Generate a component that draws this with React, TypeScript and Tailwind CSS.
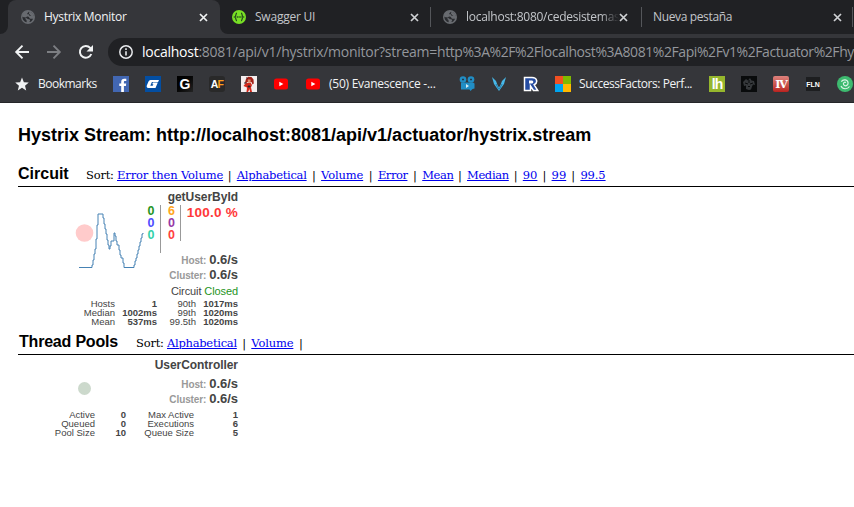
import React from "react";

const ui = "font-['Open_Sans','Noto_Sans',sans-serif]";
const arial = "font-['Liberation_Sans',Arial,sans-serif]";
const serif = "font-['DejaVu_Serif',serif]";

function Globe() {
  return (
    <svg width="14" height="14" viewBox="0 0 14 14" className="shrink-0">
      <circle cx="7" cy="7" r="7" fill="#686b70" />
      <path d="M6.800 1.500C4 1.500 2 3.300 1.500 5.800L5 6.200l2.500.6c1 .3.500 1.700 1.700 1.900h2.900c-.4 1-1.400 2.600-3 3.300l-.9-.5 1-.8-.4-1.200-2-.5L5.200 8H4.500v1.300l1 .8.2 2.200C3.300 11.800 1.600 9.800 1.400 7.500 1 4 3.500 1.300 6.800 1.500Z" fill="#2a2c30" />
      <path d="M1 4.500 3.500 1.500 7 .8 6.300 3 4.800 3.600 4 5.400 6.200 6 5 7.500 1.300 7Z" fill="#686b70" />
      <path d="M7.800 1.800c-.8 1.400-1.700 1.300-1.600 2.400h1.600L8.700 6h3.800C12.300 3.800 10.500 1.900 7.800 1.800Z" fill="#2a2c30" />
      <path d="M8.500 1.500 11.500 3l1.300 3-2 .3-1.600-1.100L8 3.300Z" fill="#686b70" />
    </svg>
  );
}

function Close({ color = "#d0d2d5" }: { color?: string }) {
  return (
    <svg width="9" height="9" viewBox="0 0 9 9" className="shrink-0">
      <path d="m1 1 7 7M8 1 1 8" stroke={color} strokeWidth="1.700" />
    </svg>
  );
}

function TabStrip() {
  return (
    <div className={`flex h-[34px] w-[854px] overflow-hidden bg-[#202124] text-[12px] ${ui}`}>
      <svg width="8" height="34" className="shrink-0"><path d="M0 34a8 8 0 0 0 8-8v8Z" fill="#35363a" /></svg>
      <div className="flex w-[212px] shrink-0 items-center rounded-t-[8px] bg-[#35363a] pl-[13px] pr-[12px] text-[#f1f3f4]">
        <Globe />
        <span className="ml-[9px] flex-1 whitespace-nowrap tracking-[-0.3px]">Hystrix Monitor</span>
        <Close color="#f1f3f4" />
      </div>
      <svg width="8" height="34" className="shrink-0"><path d="M8 34a8 8 0 0 1-8-8v8Z" fill="#35363a" /></svg>
      <div className="flex w-[202px] shrink-0 items-center pl-[4px] pr-[11px] text-[#c3c6ca]">
        <svg width="14" height="14" viewBox="0 0 14 14">
          <circle cx="7" cy="7" r="7" fill="#78df25" />
          <path d="M5 3.200C3.300 3.200 4.500 6.300 2.700 7 4.500 7.700 3.300 10.800 5 10.800M9 3.200c1.700 0 .5 3.100 2.300 3.800C9.500 7.700 10.700 10.800 9 10.800" fill="none" stroke="#23451e" strokeWidth="1.200" />
          <path d="M4.700 7h4.800" stroke="#23451e" strokeWidth="1.400" strokeDasharray="1.200 .6" />
        </svg>
        <span className="ml-[9px] flex-1 whitespace-nowrap tracking-[-0.22px]">Swagger UI</span>
        <Close />
      </div>
      <div className="mt-[7px] h-5 w-px shrink-0 bg-[#54565a]" />
      <div className="flex w-[210px] shrink-0 items-center pl-[12px] pr-[13px] text-[#c3c6ca]">
        <Globe />
        <span className="ml-[9px] w-[154px] overflow-hidden whitespace-nowrap tracking-[-0.27px] [mask-image:linear-gradient(to_right,black_88%,transparent)]">localhost:8080/cedesistemas</span>
        <Close />
      </div>
      <div className="mt-[7px] h-5 w-px shrink-0 bg-[#54565a]" />
      <div className="flex w-[210px] shrink-0 items-center pl-[11px] pr-[10px] text-[#c3c6ca]">
        <span className="flex-1 whitespace-nowrap tracking-[-0.36px]">Nueva pestaña</span>
        <Close />
      </div>
      <div className="mt-[7px] h-5 w-px shrink-0 bg-[#54565a]" />
    </div>
  );
}

function Toolbar() {
  return (
    <div className={`flex h-[36px] w-[854px] items-center overflow-hidden bg-[#35363a] ${ui}`}>
      <svg width="108" height="36" viewBox="0 0 108 36" fill="none" className="shrink-0">
        <path d="M29 18H16.500M22.500 11.700 16.200 18l6.300 6.300" stroke="#f1f3f4" strokeWidth="1.900" />
        <path d="M47 18h12.500M53.500 11.700 59.800 18l-6.300 6.300" stroke="#7d7f83" strokeWidth="1.900" />
        <path d="M91.300 20a5.900 5.900 0 1 1-1.100-6.100L92 15.700" stroke="#f1f3f4" strokeWidth="2" />
        <path d="M93 11v6.500h-6.500Z" fill="#f1f3f4" />
      </svg>
      <div className="flex h-7 flex-1 items-center overflow-hidden rounded-l-full bg-[#202124] pl-[11px]">
        <svg width="14" height="14" viewBox="0 0 14 14" className="shrink-0">
          <circle cx="7" cy="7" r="6.200" fill="none" stroke="#e8eaed" strokeWidth="1.500" />
          <path d="M7 6.200v4.300M7 3.300v1.600" stroke="#e8eaed" strokeWidth="1.600" />
        </svg>
        <span className="ml-[9px] whitespace-nowrap text-[14px] leading-[20px] tracking-[-0.25px] text-[#94979c]"><span className="text-white">localhost</span>:8081/api/v1/hystrix/monitor?stream=<span className="tracking-[-0.43px]">http%3A%2F%2Flocalhost%3A8081%2Fapi%2Fv1%2Factuator%2Fhys</span></span>
      </div>
    </div>
  );
}

function Youtube() {
  return (
    <svg width="16" height="16" viewBox="0 0 16 16" className="shrink-0">
      <rect x="1" y="2.500" width="14" height="11" rx="2.500" fill="#f00" />
      <path d="M6.300 5.700v4.600L10.400 8Z" fill="white" />
    </svg>
  );
}

function Bookmarks() {
  return (
    <div className={`flex h-[33px] w-[854px] items-center overflow-hidden border-b border-[#252629] bg-[#35363a] pb-1 text-[12px] text-[#f1f3f4] ${ui}`}>
      <svg width="14" height="14" viewBox="0 0 24 24" className="ml-[15px] shrink-0"><path d="m12 1 3.200 7.800 8.400.6-6.400 5.400 2 8.200-7.200-4.400L4.800 23l2-8.200L.4 9.400l8.400-.6Z" fill="#f1f3f4" /></svg>
      <span className="ml-[9px] w-[59px] shrink-0 whitespace-nowrap tracking-[-0.5px]">Bookmarks</span>
      <div className="ml-4 flex shrink-0 gap-4">
        <svg width="16" height="16" viewBox="0 0 16 16"><rect width="16" height="16" fill="#4267b2" /><path d="M8.200 16V10H6.300V7.500h1.900V5.900c0-2 1.200-3.200 3.100-3.200l2 .1v2.300h-1.400c-.8 0-1 .4-1 1.100v1.300h2.300l-.3 2.500h-2v6Z" fill="white" /></svg>
        <svg width="16" height="16" viewBox="0 0 16 16"><rect width="16" height="16" fill="#034ea2" /><path d="M5.500 4H14l-.9 2H6.900L5.300 9.700h2.400l.7-1.500H7.200l.7-1.700h4.900L10.500 12H3.500C1.500 12 1.300 10.500 2 9l1.500-3.500Q4.100 4 5.500 4Z" fill="white" /></svg>
        <div className={`flex h-4 w-4 items-center justify-center bg-gradient-to-br from-black to-[#242424] text-[14px] font-bold leading-none text-white ${arial}`}>G</div>
        <div className={`flex h-4 w-4 items-center justify-center rounded-[3px] bg-[#292929] text-[10.500px] font-bold leading-none tracking-[-0.8px] text-white ${arial}`}>A<span className="text-[#ff9d1c]">F</span></div>
        <svg width="16" height="16" viewBox="0 0 16 16"><rect width="16" height="16" fill="#f5eeee" /><path d="M5 3 7 .8 10.500 1l2 2.500.3 4-1.300 1L10.500 6H6L5 8 4 6.500Z" fill="#a32117" /><path d="m5.500 7 4-.5 1.500 2.500-1 2.500 1 4.500H9l-.5-3L7 16H5.500L6 11.500 2.500 10 4 8Z" fill="#d52a1c" /><path d="M6.800 3.500h2.800v3H6.800Z" fill="#dd9270" /><path d="m5.500 1.500 1 1.500M3 7h2.500M7 10h2v1H7Z" stroke="#34252b" /></svg>
        <Youtube /><Youtube />
      </div>
      <span className="ml-2 w-[107px] shrink-0 whitespace-nowrap tracking-[-0.25px]">(50) Evanescence -...</span>
      <div className="ml-[23px] flex shrink-0 gap-4">
        <svg width="16" height="16" viewBox="0 0 16 16"><circle cx="4" cy="3.500" r="3.300" fill="#218ec5" /><circle cx="12" cy="3.500" r="3.300" fill="#218ec5" /><path d="M2 6.500h12l1.500 1v5l-2 .5-2 2-1-1.500H2Z" fill="#218ec5" /><path d="M7 8v4l3-2Z" fill="#d9edf5" /><path d="M3 3.500h2M11 3.500h2" stroke="#24394a" strokeWidth="1.500" /></svg>
        <svg width="16" height="16" viewBox="0 0 16 16"><path d="m1 1 4 4 1.500 4L8 11.500 9.500 9 11 5l4-4-2 7-2.500 3.500L8 15l-2.500-3.500L3 8Z" fill="#48b8e8" /><path d="m5 8 2.500 5h1L11 8" fill="none" stroke="#237ba9" /></svg>
        <svg width="16" height="16" viewBox="0 0 16 16"><path d="M1.500 14.500V1.500H9c5.500 0 6 5.500 2.200 7.300l3.600 5.700h-4.300L7.500 10v4.500Z" fill="#254ca1" stroke="white" strokeWidth="1.500" /><path d="M6 4.500h3c1.700 0 1.700 3 0 3H6Z" fill="white" /></svg>
        <div className="grid h-4 w-4 grid-cols-2"><i className="bg-[#f25022]" /><i className="bg-[#7fba00]" /><i className="bg-[#00a4ef]" /><i className="bg-[#ffb900]" /></div>
      </div>
      <span className="ml-2 w-[114px] shrink-0 whitespace-nowrap tracking-[-0.43px]">SuccessFactors: Perf...</span>
      <div className="ml-4 flex shrink-0 gap-4">
        <div className={`flex h-4 w-4 items-center justify-center bg-[#96b72d] text-[14px] font-bold leading-none tracking-[-1px] text-white ${arial}`}>lh</div>
        <svg width="16" height="16" viewBox="0 0 16 16"><rect width="16" height="16" fill="#090b0c" /><path d="m2 6 3-3 2 1.500L9 2l1.500 2.500 2.500.5 1 4-2-.5-1 2-1 3-2 .5-3-1V9.500L3 10Z" fill="#35383b" /><path d="m4 7 3 1m2 0 3-1M7 10.500h2M8 4v3" stroke="#090b0c" /></svg>
        <div className="flex h-4 w-4 items-center justify-center rounded-[2px] bg-gradient-to-b from-[#dc817c] to-[#ba201e] font-['DejaVu_Serif',serif] text-[11px] font-bold leading-none tracking-[-1px] text-white">IV</div>
        <div className={`flex h-4 w-4 items-center justify-center border border-[#34363a] bg-[#1d1e20] text-[7px] font-bold leading-none text-white ${arial}`}>FLN</div>
        <svg width="16" height="16" viewBox="0 0 16 16"><circle cx="8" cy="8" r="8" fill="#3dba6f" /><path d="M9 6.500C7.500 5.500 5.800 7 6.700 8.700c1.200 2.200 4.600.9 4.400-1.700C10.800 3.600 6.300 2.700 4.300 5.700M4 10c1.500 3.600 6.500 3.500 8.500.5" fill="none" stroke="#daf4e4" strokeWidth="1.200" /></svg>
      </div>
    </div>
  );
}

type SortLink = { text: string; size: string };

const alphabetical: SortLink = { text: "Alphabetical", size: "w-[70px] tracking-[-0.27px]" };
const volume: SortLink = { text: "Volume", size: "w-[42.500px] tracking-[-0.15px]" };
const circuitLinks: SortLink[] = [
  { text: "Error then Volume", size: "w-[105.500px] tracking-[-0.13px]" },
  alphabetical,
  volume,
  { text: "Error", size: "w-[30px] tracking-[-0.45px]" },
  { text: "Mean", size: "w-[30.500px] tracking-[-0.4px]" },
  { text: "Median", size: "w-[41.500px] tracking-[-0.35px]" },
  { text: "90", size: "w-[14.500px]" },
  { text: "99", size: "w-[14.500px]" },
  { text: "99.5", size: "w-[25px] tracking-[-0.1px]" },
];

function SortLinks({ links, trailing = false }: { links: SortLink[]; trailing?: boolean }) {
  return (
    <div className={`flex whitespace-nowrap text-[11.500px] leading-[14px] ${serif}`}>
      <span className="w-[31px] tracking-[-0.2px]">Sort:</span>
      {links.map((link, i) => (
        <React.Fragment key={link.text}>
          <a className={`text-[#0000ee] underline underline-offset-1 ${link.size}`}>{link.text}</a>
          {(i < links.length - 1 || trailing) && <span className="w-[14.300px] text-center">|</span>}
        </React.Fragment>
      ))}
    </div>
  );
}

function Rate({ label }: { label: string }) {
  return (
    <div className="flex h-[15px] items-baseline justify-end leading-[13px]">
      <span className="mr-[3px] text-[10px] font-bold tracking-[-0.1px] text-[#999]">{label}</span>
      <span className="text-[13px] font-bold tracking-[-0.05px] text-[#444]">0.6/s</span>
    </div>
  );
}

function Circuit() {
  return (
    <section className={`h-[140px] w-[220px] pt-[3px] text-[#444] ${arial}`}>
      <div className="h-[15px] text-right text-[12px] font-bold leading-[15px] tracking-[-0.03px]">getUserById</div>
      <div className="flex h-[48px]">
        <svg width="127" height="65" viewBox="0 0 127 65" className="shrink-0">
          <circle cx="66.500" cy="28" r="8.800" fill="#ffcbcb" />
          <path d="M61 62.500H74V60h1v-5h1v-6h1v-5h1V34h1V20h1V9h5v4h1v6h1v5h1v5h1v6h1v5h1v4h1v-3h1v-5h3v-8h1v3h1v5h1v4h2v5h1v5h1v3h2v5h1v4.500h10V60h1v-4h1v-3h1v-4h1v-4h1v-4h1v-4h1v-4h1v-4h1v-1" fill="none" stroke="#4682b4" strokeWidth="1" />
        </svg>
        <div className="w-[9.500px] text-right text-[12.500px] font-bold leading-[12px]"><p className="text-[#249424]">0</p><p className="text-[#4d4dff]">0</p><p className="text-[#32d1aa]">0</p></div>
        <div className="ml-[5.500px] h-[48px] w-px bg-[#999]" />
        <div className="w-[14px] text-right text-[12.500px] font-bold leading-[12px]"><p className="text-[#ffa623]">6</p><p className="text-[#963aa6]">0</p><p className="text-[#ff4040]">0</p></div>
        <div className="ml-[5px] h-9 w-px bg-[#999]" />
        <div className="ml-auto whitespace-nowrap text-[13.500px] font-bold leading-[15px] tracking-[0.25px] text-[#ff3838]">100.0 %</div>
      </div>
      <Rate label="Host:" />
      <Rate label="Cluster:" />
      <div className="h-[16px] text-right text-[11px] leading-[17px] tracking-[-0.1px]">Circuit <span className="text-[#249424]">Closed</span></div>
      <div className="grid grid-cols-[97px_42px_39px_42px] text-right text-[9.500px] leading-[9px]">
        <span>Hosts</span><b>1</b><span>90th</span><b>1017ms</b>
        <span>Median</span><b>1002ms</b><span>99th</span><b>1020ms</b>
        <span>Mean</span><b>537ms</b><span>99.5th</span><b>1020ms</b>
      </div>
    </section>
  );
}

function ThreadPool() {
  return (
    <section className={`w-[220px] pt-[3px] text-[#444] ${arial}`}>
      <div className="h-[19px] text-right text-[12px] font-bold leading-[15px] tracking-[-0.05px]">UserController</div>
      <div className="flex justify-between">
        <div className="ml-[60px] mt-[5px] h-[13px] w-[13px] rounded-full bg-[#ccd9cc]" />
        <div><Rate label="Host:" /><Rate label="Cluster:" /></div>
      </div>
      <div className="mt-[3px] grid grid-cols-[77px_31px_68px_44px] text-right text-[9.500px] leading-[9px]">
        <span>Active</span><b className="font-semibold">0</b><span>Max Active</span><b className="font-semibold">1</b>
        <span>Queued</span><b className="font-semibold">0</b><span>Executions</span><b className="font-semibold">6</b>
        <span>Pool Size</span><b className="font-semibold">10</b><span>Queue Size</span><b className="font-semibold">5</b>
      </div>
    </section>
  );
}

export default function App() {
  return (
    <div className="h-[507px] w-[854px] overflow-hidden bg-white text-black">
      <TabStrip />
      <Toolbar />
      <Bookmarks />
      <main className="ml-[18px]">
        <h1 className={`h-[62px] pt-[21px] text-[18px] font-bold leading-[22px] ${arial}`}>Hystrix Stream: http://localhost:8081/api/v1/actuator/hystrix.stream</h1>
        <div className="flex h-[22px] border-b border-black">
          <h2 className={`w-[68px] text-[16px] font-bold leading-[17px] ${arial}`}>Circuit</h2>
          <div className="pt-[3px]"><SortLinks links={circuitLinks} /></div>
        </div>
        <Circuit />
        <div className="flex h-[28px] border-b border-black pt-[6px]">
          <h2 className={`w-[118px] pl-px text-[16px] font-bold leading-[17px] tracking-[-0.2px] ${arial}`}>Thread Pools</h2>
          <div className="pt-[3px]"><SortLinks links={[alphabetical, volume]} trailing /></div>
        </div>
        <ThreadPool />
      </main>
    </div>
  );
}
